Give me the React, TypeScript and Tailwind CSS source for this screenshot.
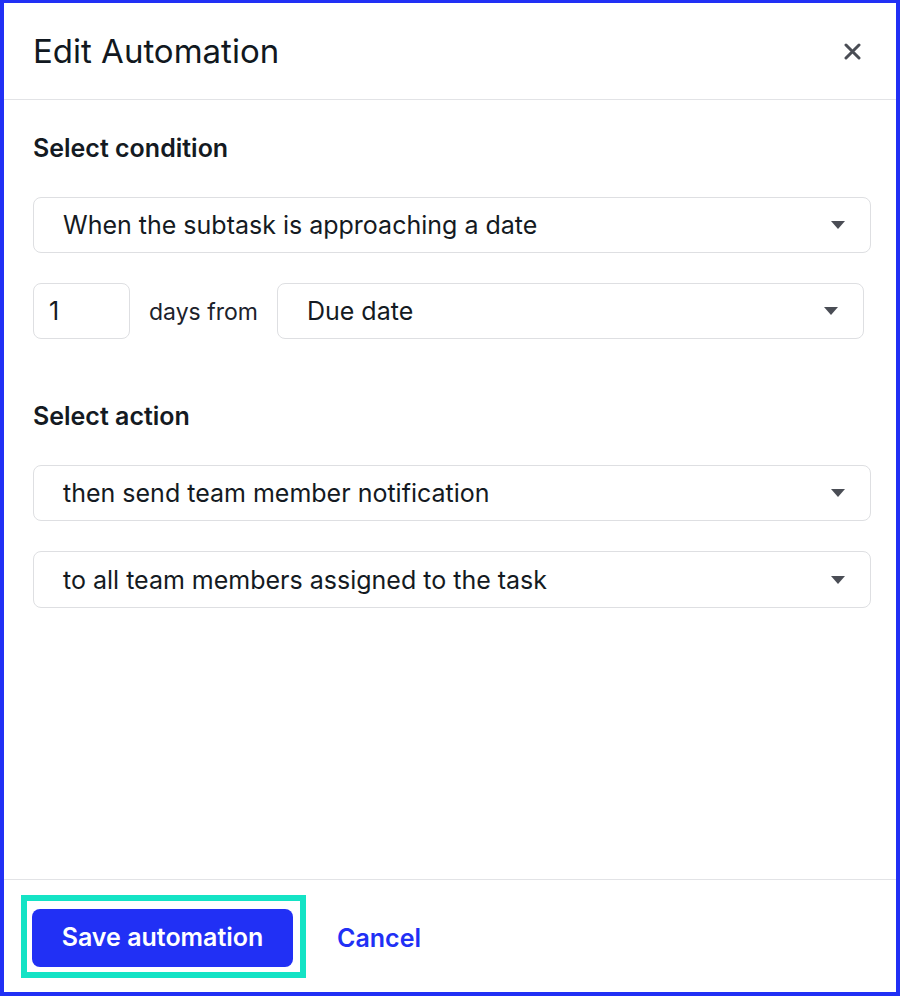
import React from "react";

const Caret = () => (
  <svg width="14" height="8" viewBox="0 0 14 8" className="shrink-0">
    <path d="M0 0 L14 0 L7 8 Z" fill="#4a4d55" />
  </svg>
);

function Select({ label, className = "" }: { label: string; className?: string }) {
  return (
    <div
      className={`flex h-[56px] items-center justify-between rounded-[8px] border border-[#dedfe2] bg-white pl-[29px] pr-[25px] ${className}`}
    >
      <span className="pt-[2px] text-[25px] text-[#141a22]">{label}</span>
      <Caret />
    </div>
  );
}

export default function App() {
  return (
    <div
      className="flex h-[996px] w-[900px] flex-col border-4 border-t-[3px] border-[#2130f5] bg-white text-[#141a22]"
      style={{ fontFamily: "Inter, 'Noto Sans', sans-serif" }}
    >
      <div className="flex h-[97px] shrink-0 items-center justify-between border-b border-[#e2e3e6] pl-[29px] pr-[35px]">
        <h1 className="text-[33px] font-normal leading-none text-[#111820]">Edit Automation</h1>
        <svg width="17" height="17" viewBox="0 0 17 17">
          <path d="M2 2 L15 15 M15 2 L2 15" stroke="#4a4d55" strokeWidth="3" strokeLinecap="round" />
        </svg>
      </div>

      <div className="flex flex-1 flex-col pl-[29px] pr-[25px] pt-[34px]">
        <div className="h-[28px] text-[25px] font-semibold leading-[28px]">Select condition</div>
        <Select label="When the subtask is approaching a date" className="mt-[35px]" />
        <div className="mt-[30px] flex w-[831px] items-center gap-[19px]">
          <div className="flex h-[56px] w-[97px] items-center rounded-[8px] border border-[#dedfe2] pl-[15px] pt-[2px] text-[25px]">
            1
          </div>
          <span className="pt-[2px] text-[23px] text-[#1c222b]">days from</span>
          <Select label="Due date" className="flex-1" />
        </div>
        <div className="mt-[63px] h-[28px] text-[25px] font-semibold leading-[28px]">Select action</div>
        <Select label="then send team member notification" className="mt-[35px]" />
        <Select label="to all team members assigned to the task" className="mt-[30px] h-[57px]" />
      </div>

      <div className="flex h-[113px] shrink-0 items-start border-t border-[#e2e3e6] pl-[17px] pt-[15px]">
        <div className="border-[6px] border-[#14e3c5] pb-[5px] pl-[5px] pr-[7px] pt-[8px]">
          <button className="flex h-[58px] w-[261px] items-center justify-center rounded-[8px] bg-[#2130f5] text-[25px] font-semibold text-white">
            Save automation
          </button>
        </div>
        <button className="ml-[31px] mt-[25px] text-[25px] font-semibold text-[#2130f5]">Cancel</button>
      </div>
    </div>
  );
}
